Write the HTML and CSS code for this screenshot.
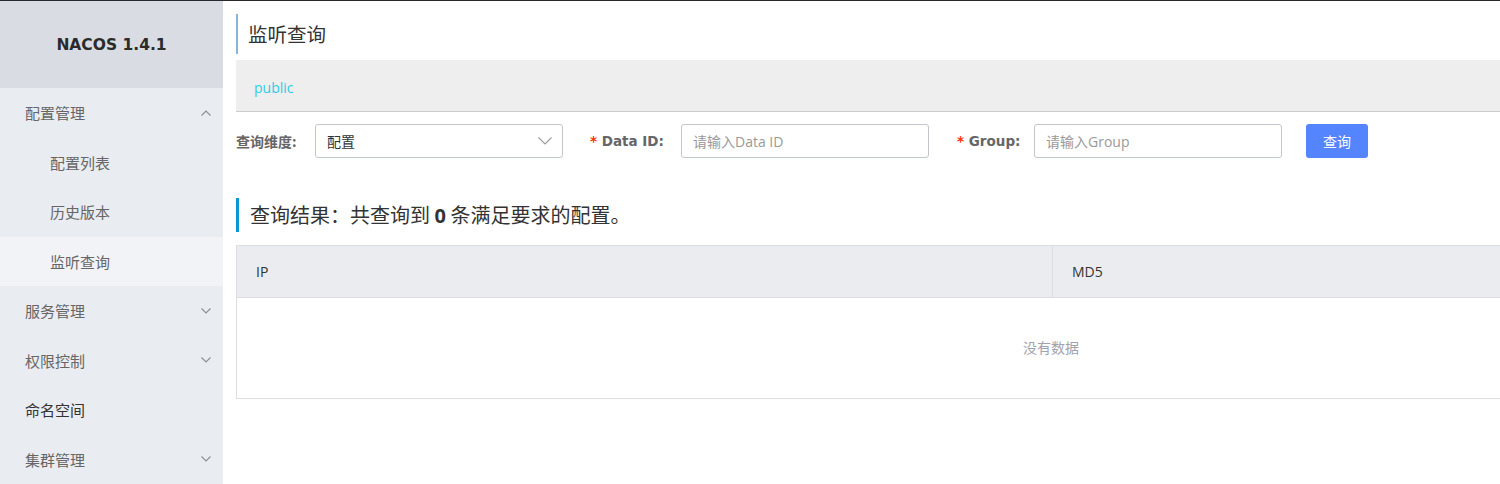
FILE: index.html
```html
<!DOCTYPE html>
<html lang="zh-CN">
<head>
<meta charset="utf-8">
<title>Nacos</title>
<link rel="stylesheet" href="styles.css">
</head>
<body>
<div class="layout">
  <aside class="sidebar">
    <div class="brand">NACOS 1.4.1</div>
    <ul class="menu">
      <li class="menu-item group">
        <span>配置管理</span>
        <svg class="chev" width="10" height="6" viewBox="0 0 10 6"><path d="M0.5 5.5 L5 1 L9.5 5.5" fill="none" stroke="#8a8d94" stroke-width="1.1"/></svg>
      </li>
      <li class="menu-item sub"><span>配置列表</span></li>
      <li class="menu-item sub"><span>历史版本</span></li>
      <li class="menu-item sub active"><span>监听查询</span></li>
      <li class="menu-item group">
        <span>服务管理</span>
        <svg class="chev" width="10" height="6" viewBox="0 0 10 6"><path d="M0.5 0.5 L5 5 L9.5 0.5" fill="none" stroke="#8a8d94" stroke-width="1.1"/></svg>
      </li>
      <li class="menu-item group">
        <span>权限控制</span>
        <svg class="chev" width="10" height="6" viewBox="0 0 10 6"><path d="M0.5 0.5 L5 5 L9.5 0.5" fill="none" stroke="#8a8d94" stroke-width="1.1"/></svg>
      </li>
      <li class="menu-item leaf"><span>命名空间</span></li>
      <li class="menu-item group">
        <span>集群管理</span>
        <svg class="chev" width="10" height="6" viewBox="0 0 10 6"><path d="M0.5 0.5 L5 5 L9.5 0.5" fill="none" stroke="#8a8d94" stroke-width="1.1"/></svg>
      </li>
    </ul>
  </aside>
  <main class="main">
    <div class="content">
      <h1 class="page-title">监听查询</h1>
      <div class="ns-bar"><span class="ns">public</span></div>
      <form class="query-form">
        <div class="field f1">
          <label class="flabel">查询维度:</label>
          <div class="select">
            <span>配置</span>
            <svg width="14" height="8" viewBox="0 0 14 8"><path d="M0.5 0.5 L7 7 L13.5 0.5" fill="none" stroke="#9a9ca4" stroke-width="1.1"/></svg>
          </div>
        </div>
        <div class="field f2">
          <label class="flabel req"><span class="star">*</span> Data ID:</label>
          <div class="input"><span class="ph">请输入Data ID</span></div>
        </div>
        <div class="field f3">
          <label class="flabel req"><span class="star">*</span> Group:</label>
          <div class="input"><span class="ph">请输入Group</span></div>
        </div>
        <button type="button" class="btn">查询</button>
      </form>
      <h2 class="result-title">查询结果：共查询到 <b>0</b> 条满足要求的配置。</h2>
      <div class="table">
        <div class="thead">
          <div class="th">IP</div>
          <div class="th">MD5</div>
        </div>
        <div class="tbody">没有数据</div>
      </div>
    </div>
  </main>
</div>
</body>
</html>
```

FILE: styles.css
```css
* { box-sizing: border-box; }
html, body { margin: 0; padding: 0; }
body {
  width: 1500px;
  height: 484px;
  overflow: hidden;
  border-top: 1px solid #25292c;
  background: #fff;
  font-family: "Open Sans", "Noto Sans CJK SC", sans-serif;
  color: #333;
}
.layout { display: flex; height: 483px; }

.sidebar {
  width: 223px;
  flex: none;
  background: #e9ecf0;
  display: flex;
  flex-direction: column;
}
.brand {
  height: 87px;
  background: #d9dde3;
  display: flex;
  align-items: center;
  justify-content: center;
  font-family: "DejaVu Sans", sans-serif;
  font-weight: bold;
  font-size: 15.5px;
  color: #2b2b2b;
}
.menu { list-style: none; margin: 0; padding: 0; }
.menu-item {
  height: 49.5px;
  display: flex;
  align-items: center;
  justify-content: space-between;
  padding: 0 12px 0 25px;
  font-family: "Noto Sans CJK SC", sans-serif;
  font-size: 15px;
  color: #666;
}
.menu-item.sub { padding-left: 50px; }
.menu-item.active { background: #f1f3f6; }
.menu-item.leaf { color: #333; }
.chev { flex: none; }

.main { flex: 1; overflow: hidden; padding-left: 13px; }
.content { width: 1640px; }

.page-title {
  margin: 13px 0 0 0;
  height: 40px;
  line-height: 40px;
  border-left: 2px solid #86b6e0;
  padding-left: 10px;
  font-family: "Noto Sans CJK SC", sans-serif;
  font-weight: normal;
  font-size: 19.5px;
  color: #333;
}
.ns-bar {
  margin-top: 6px;
  height: 52px;
  background: #eeeeee;
  border-bottom: 1px solid #cccccc;
  display: flex;
  align-items: center;
  padding: 3px 0 0 18px;
}
.ns { color: #2ccde6; font-size: 14px; }

.query-form {
  margin-top: 12px;
  height: 34px;
  display: flex;
  align-items: center;
}
.field { display: flex; align-items: center; }
.flabel {
  font-family: "DejaVu Sans", "Noto Sans CJK SC", sans-serif;
  font-weight: bold;
  font-size: 13.5px;
  color: #666;
}
.f1 .flabel { width: 79px; font-family: "Noto Sans CJK SC", sans-serif; font-size: 14px; }
.f2 { margin-left: 27px; }
.f2 .flabel { width: 91px; }
.f3 { margin-left: 28px; }
.f3 .flabel { width: 77px; }
.star { color: #ff3000; font-weight: bold; }
.select, .input {
  width: 248px;
  height: 34px;
  border: 1px solid #c4c6cf;
  border-radius: 3px;
  display: flex;
  align-items: center;
  justify-content: space-between;
  padding: 0 10px 0 11px;
  font-size: 14px;
  background: #fff;
}
.select span { font-family: "Noto Sans CJK SC", sans-serif; color: #333; }
.ph { color: #999; }
.btn {
  margin-left: 24px;
  width: 62px;
  height: 34px;
  border: none;
  border-radius: 3px;
  background: #5584ff;
  color: #fff;
  font-family: "Noto Sans CJK SC", sans-serif;
  font-size: 14px;
  padding: 0;
}

.result-title {
  margin: 40px 0 0 0;
  height: 34px;
  line-height: 34px;
  border-left: 3px solid #0b97d4;
  padding-left: 11px;
  font-family: "Noto Sans CJK SC", sans-serif;
  font-weight: normal;
  font-size: 20px;
  color: #333;
}
.result-title b { font-family: "Open Sans", sans-serif; font-weight: bold; }

.table {
  margin-top: 13px;
  width: 1630px;
  border: 1px solid #dcdee3;
}
.thead {
  display: grid;
  grid-template-columns: 815px 1fr;
  height: 52px;
  background: #ebecf0;
  border-bottom: 1px solid #dcdee3;
}
.th {
  display: flex;
  align-items: center;
  padding-left: 19px;
  font-size: 14px;
  color: #333;
}
.th + .th { border-left: 1px solid #dcdee3; }
.tbody {
  height: 100px;
  display: flex;
  align-items: center;
  justify-content: center;
  padding-bottom: 3px;
  font-family: "Noto Sans CJK SC", sans-serif;
  font-size: 14px;
  color: #a0a2ad;
}
```
